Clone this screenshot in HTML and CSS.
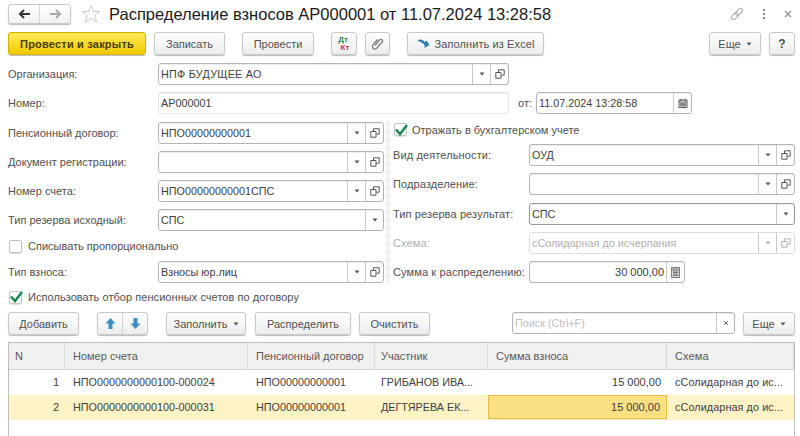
FILE: index.html
```html
<!DOCTYPE html>
<html lang="ru">
<head>
<meta charset="utf-8">
<title>Распределение взносов</title>
<link rel="stylesheet" href="styles.css">
</head>
<body>
<svg class="defs" width="0" height="0">
  <symbol id="copy" viewBox="0 0 10 10"><path d="M3.500 3V.8h5.700v5.400H6.500M.8 3.500h5.200v5.700H.8z" fill="none" stroke="#555" stroke-width="1"/></symbol>
  <symbol id="tri" viewBox="0 0 6 4"><path d="M.5.5h5L3 3.500z" fill="#555"/></symbol>
</svg>
<div class="page">
  <header class="head">
    <div class="nav">
      <span class="nav-btn"><svg width="13" height="10" viewBox="0 0 13 10"><path d="M6 1 2 5l4 4M2 5h10" fill="none" stroke="#333" stroke-width="2"/></svg></span>
      <span class="nav-btn"><svg width="13" height="10" viewBox="0 0 13 10"><path d="M7 1l4 4-4 4M11 5H1" fill="none" stroke="#aaa" stroke-width="2"/></svg></span>
    </div>
    <svg class="star" width="20" height="20" viewBox="0 0 20 20"><path d="M10 1.500l2.500 6h6.200l-5 4 1.900 6.600L10 14.300l-5.600 3.800 1.900-6.600-5-4h6.200z" fill="none" stroke="#c9c9c9"/></svg>
    <h1 class="title">Распределение взносов АР000001 от 11.07.2024 13:28:58</h1>
    <div class="win">
      <svg width="14" height="14" viewBox="0 0 14 14"><g fill="none" stroke="#aaa" transform="rotate(-45 7 7)"><rect x="0" y="4.800" width="8" height="4.400" rx="2.200"/><rect x="6" y="4.800" width="8" height="4.400" rx="2.200"/></g></svg>
      <svg width="4" height="12" viewBox="0 0 4 12"><path d="M1 1h2v2H1zM1 5h2v2H1zM1 9h2v2H1z" fill="#888"/></svg>
      <svg width="8" height="8" viewBox="0 0 8 8"><path d="M1 1l6 6M7 1 1 7" stroke="#888" stroke-width="1.100"/></svg>
    </div>
  </header>

  <div class="toolbar main-bar">
    <button class="btn primary w-post">Провести и закрыть</button>
    <button class="btn w-save">Записать</button>
    <button class="btn w-run gap-l">Провести</button>
    <button class="btn w-icon gap-l dtkt"><span class="dt">Дт</span><span class="kt">Кт</span></button>
    <button class="btn w-clip"><svg width="12" height="14" viewBox="0 0 12 14"><path d="M3 8.500 7.500 3a1.700 1.700 0 0 1 2.600 2.200L4.500 11.500a2.600 2.600 0 0 1-3.700-3.500L5.500 2.500" fill="none" stroke="#777" stroke-width="1.200"/></svg></button>
    <button class="btn w-excel gap-l"><svg width="13" height="12" viewBox="0 0 13 12"><path d="M0 3c3-2.500 6-2 7.500 1l2-1.500 3 4.500-5 3 .2-2.500C6 5 3.500 3.500 0 3z" fill="#2b7fb0"/></svg>Заполнить из Excel</button>
    <span class="spacer"></span>
    <button class="btn w-more">Еще <svg class="tri" width="6" height="4"><use href="#tri"/></svg></button>
    <button class="btn w-help">?</button>
  </div>

  <div class="form-top">
    <div class="row">
      <label class="lbl">Организация:</label>
      <div class="field w-org"><span class="val">НПФ БУДУЩЕЕ АО</span><span class="fbtn"><svg width="6" height="4"><use href="#tri"/></svg></span><span class="fbtn"><svg width="10" height="10"><use href="#copy"/></svg></span></div>
    </div>
    <div class="row num-row">
      <label class="lbl">Номер:</label>
      <div class="field w-num soft"><span class="val">АР000001</span></div>
      <label class="from">от:</label>
      <div class="field w-date"><span class="val">11.07.2024 13:28:58</span><span class="fbtn"><svg width="10" height="10" viewBox="0 0 10 10"><path d="M1 2h8v7.500H1zM1 4h8M3 .8v2M7 .8v2" fill="none" stroke="#555"/><path d="M2 5h6v3.500H2z" fill="#888"/></svg></span></div>
    </div>
  </div>

  <div class="cols">
    <div class="col left">
      <div class="row"><label class="lbl">Пенсионный договор:</label><div class="field grow"><span class="val">НПО00000000001</span><span class="fbtn"><svg width="6" height="4"><use href="#tri"/></svg></span><span class="fbtn"><svg width="10" height="10"><use href="#copy"/></svg></span></div></div>
      <div class="row"><label class="lbl">Документ регистрации:</label><div class="field grow"><span class="val"></span><span class="fbtn"><svg width="6" height="4"><use href="#tri"/></svg></span><span class="fbtn"><svg width="10" height="10"><use href="#copy"/></svg></span></div></div>
      <div class="row"><label class="lbl">Номер счета:</label><div class="field grow"><span class="val">НПО00000000001СПС</span><span class="fbtn"><svg width="6" height="4"><use href="#tri"/></svg></span><span class="fbtn"><svg width="10" height="10"><use href="#copy"/></svg></span></div></div>
      <div class="row"><label class="lbl">Тип резерва исходный:</label><div class="field grow"><span class="val">СПС</span><span class="fbtn"><svg width="6" height="4"><use href="#tri"/></svg></span></div></div>
      <div class="check-row"><span class="box"></span>Списывать пропорционально</div>
      <div class="row"><label class="lbl">Тип взноса:</label><div class="field grow"><span class="val">Взносы юр.лиц</span><span class="fbtn"><svg width="6" height="4"><use href="#tri"/></svg></span><span class="fbtn"><svg width="10" height="10"><use href="#copy"/></svg></span></div></div>
    </div>
    <div class="col right">
      <div class="check-row"><span class="box"><svg width="14" height="12" viewBox="0 0 14 12"><path d="M2 5.500 6 10 13 1" fill="none" stroke="#15884e" stroke-width="2.400"/></svg></span>Отражать в бухгалтерском учете</div>
      <div class="row"><label class="lbl r">Вид деятельности:</label><div class="field grow"><span class="val">ОУД</span><span class="fbtn"><svg width="6" height="4"><use href="#tri"/></svg></span><span class="fbtn"><svg width="10" height="10"><use href="#copy"/></svg></span></div></div>
      <div class="row"><label class="lbl r">Подразделение:</label><div class="field grow"><span class="val"></span><span class="fbtn"><svg width="6" height="4"><use href="#tri"/></svg></span><span class="fbtn"><svg width="10" height="10"><use href="#copy"/></svg></span></div></div>
      <div class="row tall"><label class="lbl r">Тип резерва результат:</label><div class="field grow dark"><span class="val">СПС</span><span class="fbtn"><svg width="6" height="4"><use href="#tri"/></svg></span></div></div>
      <div class="row off"><label class="lbl r">Схема:</label><div class="field grow"><span class="val">сСолидарная до исчерпания</span><span class="fbtn"><svg width="6" height="4"><use href="#tri"/></svg></span><span class="fbtn"><svg width="10" height="10"><use href="#copy"/></svg></span></div></div>
      <div class="row"><label class="lbl r">Сумма к распределению:</label><div class="field w-sum"><span class="val num">30 000,00</span><span class="fbtn"><svg width="9" height="11" viewBox="0 0 9 11"><path d="M.5.500h8v10h-8z" fill="#ddd" stroke="#777"/><path d="M2 2h5v2H2zM2 5.500h5M2 7h5M2 8.500h5" fill="none" stroke="#777"/></svg></span></div></div>
    </div>
  </div>

  <div class="check-row use-filter"><span class="box"><svg width="14" height="12" viewBox="0 0 14 12"><path d="M2 5.500 6 10 13 1" fill="none" stroke="#15884e" stroke-width="2.400"/></svg></span>Использовать отбор пенсионных счетов по договору</div>

  <div class="toolbar table-bar">
    <button class="btn w-add">Добавить</button>
    <div class="arrows">
      <span class="arrow"><svg width="11" height="13" viewBox="0 0 11 13"><path d="M5.500 1 10.500 6.500H7.500V12h-4V6.500H.5z" fill="#3c8fc4"/></svg></span>
      <span class="arrow"><svg width="11" height="13" viewBox="0 0 11 13"><path d="M5.500 12 10.500 6.500H7.500V1h-4v5.500H.5z" fill="#3c8fc4"/></svg></span>
    </div>
    <button class="btn w-fill">Заполнить <svg class="tri" width="6" height="4"><use href="#tri"/></svg></button>
    <button class="btn w-dist">Распределить</button>
    <button class="btn w-clear">Очистить</button>
    <span class="spacer"></span>
    <div class="field w-search"><span class="val hint">Поиск (Ctrl+F)</span><span class="fbtn"><svg width="6" height="6" viewBox="0 0 6 6"><path d="M1 1l4 4M5 1 1 5" stroke="#666"/></svg></span></div>
    <button class="btn w-more2">Еще <svg class="tri" width="6" height="4"><use href="#tri"/></svg></button>
  </div>

  <div class="table">
    <div class="tr th">
      <div class="c c-n">N</div><div class="c c-acc">Номер счета</div><div class="c c-con">Пенсионный договор</div><div class="c c-who">Участник</div><div class="c c-sum">Сумма взноса</div><div class="c c-sch">Схема</div>
    </div>
    <div class="tr">
      <div class="c c-n num">1</div><div class="c c-acc">НПО0000000000100-000024</div><div class="c c-con">НПО00000000001</div><div class="c c-who">ГРИБАНОВ ИВА...</div><div class="c c-sum num">15 000,00</div><div class="c c-sch">сСолидарная до ис...</div>
    </div>
    <div class="tr sel">
      <div class="c c-n num">2</div><div class="c c-acc">НПО0000000000100-000031</div><div class="c c-con">НПО00000000001</div><div class="c c-who">ДЕГТЯРЕВА ЕК...</div><div class="c c-sum num cur">15 000,00</div><div class="c c-sch">сСолидарная до ис...</div>
    </div>
  </div>
</div>
</body>
</html>
```

FILE: styles.css
```css
* { box-sizing: border-box; }
html, body { margin: 0; padding: 0; background: #fff; }
.defs { position: absolute; }
.page {
  width: 800px; height: 436px; overflow: hidden; display: flex; flex-direction: column;
  font: 11px/14px "Liberation Sans", Arial, sans-serif; color: #505050; background: #fff;
}
.head { display: flex; align-items: center; height: 24px; margin-top: 2px; padding: 0 8px; }
.nav { display: flex; width: 63px; height: 20px; border: 1px solid #c8c8c8; border-radius: 3px; background: linear-gradient(#fff, #f1f1f1); box-shadow: 0 1px 1px #bbb; }
.nav-btn { flex: 1; display: flex; align-items: center; justify-content: center; }
.nav-btn + .nav-btn { border-left: 1px solid #d8d8d8; }
.star { margin-left: 10px; }
.title { margin: 0 0 0 8px; font: 400 16.5px/24px "Liberation Sans", Arial, sans-serif; color: #1a1a1a; white-space: nowrap; }
.win { margin-left: auto; display: flex; align-items: center; gap: 18px; }

.toolbar { display: flex; align-items: stretch; height: 23px; padding: 0 5px 0 8px; }
.main-bar { margin-top: 6px; }
.spacer { flex: 1; }
.btn {
  height: 23px; padding: 0; margin: 0 8px 0 0; border: 1px solid #c9c9c9; border-radius: 3px; box-shadow: 0 1px 1px #bdbdbd;
  background: linear-gradient(#fff, #ececec); font: 11px/14px "Liberation Sans", Arial, sans-serif; color: #505050;
  display: flex; align-items: center; justify-content: center; gap: 5px; white-space: nowrap;
}
.primary { background: linear-gradient(#fdec5b, #f2c900); border-color: #d6b200; color: #4a3c00; font-weight: 700; letter-spacing: .2px; }
.w-post { width: 138px; }
.w-save { width: 71px; }
.gap-l { margin-left: 9px; }
.w-run { width: 72px; }
.w-icon { width: 26px; }
.w-clip { width: 25px; }
.w-excel { width: 137px; letter-spacing: .1px; }
.w-more { width: 52px; }
.w-help { width: 26px; margin-right: 0; font-weight: 700; font-size: 12px; }
.dtkt { flex-direction: column; gap: 0; font: 700 8px/8px "Liberation Sans", Arial, sans-serif; }
.dt { color: #2c8a44; margin-right: 2px; }
.kt { color: #c8383a; margin-left: 2px; }

.form-top { margin-top: 8px; padding-left: 8px; display: flex; flex-direction: column; gap: 7px; }
.row { display: flex; align-items: center; height: 22px; }
.lbl { width: 150px; flex: none; white-space: nowrap; }
.lbl.r { width: 136px; margin-left: 1px; letter-spacing: .12px; }
.field {
  display: flex; align-items: stretch; height: 22px; border: 1px solid #b4b4b4; border-radius: 3px; background: #fff;
  color: #404040; box-shadow: inset 0 1px 1px #eee;
}
.val { flex: 1; padding-left: 2px; font-size: 10.8px; line-height: 20px; white-space: nowrap; overflow: hidden; }
.val.num { text-align: right; padding: 0 2px 0 0; font-size: 11px; }
.fbtn { width: 18px; flex: none; border-left: 1px solid #c8c8c8; display: flex; align-items: center; justify-content: center; }
.grow { flex: 1; }
.w-org { width: 351px; letter-spacing: .25px; }
.w-num { width: 351px; }
.soft { border-color: #e2e2e2; }
.from { width: 27px; padding-left: 9px; flex: none; }
.w-date { width: 156px; }
.w-sum { width: 156px; }
.dark { border-color: #999; }
.off .lbl, .off .val { color: #b0b0b0; }
.off .field { border-color: #dedede; box-shadow: none; }
.off svg { opacity: .45; }

.cols { display: flex; margin-top: 8px; padding-left: 8px; }
.col { display: flex; flex-direction: column; gap: 7px; }
.left { width: 380px; padding-right: 3px; border-right: 1px dotted #cfcfcf; }
.right { width: 407px; padding-left: 4px; }
.right .check-row { height: 15px; }
.tall { margin-top: 1px; }
.check-row { display: flex; align-items: center; height: 16px; white-space: nowrap; }
.box { width: 13px; height: 13px; margin: 0 6px 0 1px; flex: none; border: 1px solid #c2c2c2; border-radius: 2px; box-shadow: 0 1px 1px #ddd; display: flex; align-items: center; justify-content: center; }
.right .box { margin: 0 5px 0 2px; }
.box svg { flex: none; }
.use-filter { margin: 6px 0 0 8px; letter-spacing: .05px; }

.table-bar { margin-top: 7px; }
.w-add { width: 71px; margin-right: 18px; }
.arrows { width: 51px; height: 23px; margin-right: 18px; display: flex; border: 1px solid #c9c9c9; border-radius: 3px; box-shadow: 0 1px 1px #bdbdbd; background: linear-gradient(#fff, #ececec); }
.arrow { flex: 1; display: flex; align-items: center; justify-content: center; }
.arrow + .arrow { border-left: 1px solid #d4d4d4; }
.w-fill { width: 80px; margin-right: 9px; }
.w-dist { width: 96px; }
.w-clear { width: 71px; }
.w-search { width: 223px; margin-right: 8px; }
.hint { color: #bdbdbd; }
.w-more2 { width: 52px; margin-right: 0; }

.table { margin: 7px 5px 0 8px; flex: 1; border: 1px solid #bdbdbd; border-bottom: 0; }
.tr { display: flex; height: 25px; }
.th { height: 27px; background: #f0f0f0; border-bottom: 1px solid #d6d6d6; }
.th .c { padding-top: 3px; line-height: 20px; border-right: 1px solid #dcdcdc; font-size: 11px; color: #5a5a5a; }
.c { padding: 0 5px 0 8px; font-size: 10.8px; line-height: 24px; white-space: nowrap; overflow: hidden; color: #404040; }
.c.num { text-align: right; font-size: 11px; }
.c-n { width: 56px; padding-left: 6px; }
.c-n.num { padding-right: 6px; }
.c-acc { width: 183px; }
.c-con { width: 127px; }
.c-who { width: 113px; padding-left: 6px; }
.c-sum { width: 179px; padding-right: 6px; }
.c-sch { flex: 1; letter-spacing: .1px; }
.sel { background: #fdf3c4; border-bottom: 1px solid #f3ecd0; }
.cur { background: #fbdf83; border: 1px solid #e8bd3f; line-height: 22px; }
```
